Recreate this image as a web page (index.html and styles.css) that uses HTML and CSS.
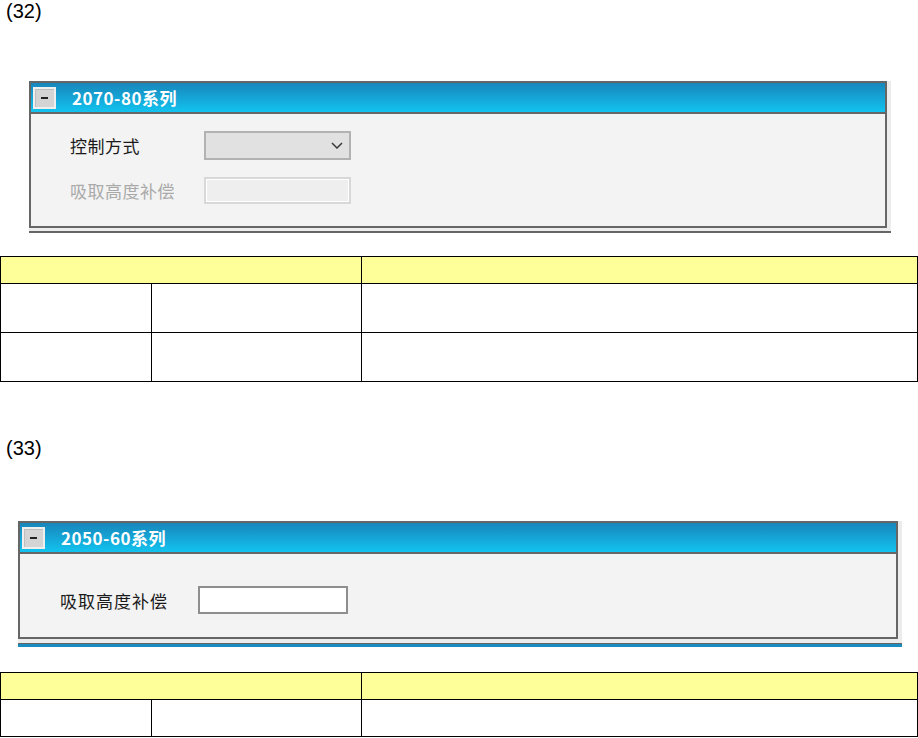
FILE: index.html
```html
<!DOCTYPE html>
<html lang="zh-CN">
<head>
    <meta charset="UTF-8">
    <meta name="viewport" content="width=device-width, initial-scale=1.0">
    <title>系列参数</title>
    <link rel="stylesheet" href="styles.css">
</head>
<body>
    <p class="caption">(32)</p>
    <div class="shot shot-a">
        <div class="panel">
            <div class="panel-head">
                <span class="toggle"></span>
                <span class="panel-title">2070-80系列</span>
            </div>
            <div class="panel-body">
                <div class="field">
                    <span class="field-label">控制方式</span>
                    <div class="select">
                        <svg width="12" height="7" viewBox="0 0 12 7"><path d="M1 1 L6 6 L11 1" fill="none" stroke="#3a3a3a" stroke-width="1.5"/></svg>
                    </div>
                </div>
                <div class="field">
                    <span class="field-label disabled">吸取高度补偿</span>
                    <div class="text-input disabled"></div>
                </div>
            </div>
        </div>
        <div class="next-head"></div>
    </div>

    <table class="spec spec-a">
        <colgroup><col class="c1"><col class="c2"><col class="c3"></colgroup>
        <tr class="head"><td colspan="2"></td><td></td></tr>
        <tr><td></td><td></td><td></td></tr>
        <tr><td></td><td></td><td></td></tr>
    </table>

    <p class="caption caption-b">(33)</p>
    <div class="shot shot-b">
        <div class="panel">
            <div class="panel-head">
                <span class="toggle"></span>
                <span class="panel-title">2050-60系列</span>
            </div>
            <div class="panel-body">
                <div class="field">
                    <span class="field-label">吸取高度补偿</span>
                    <div class="text-input"></div>
                </div>
            </div>
        </div>
        <div class="next-head"></div>
    </div>

    <table class="spec spec-b">
        <colgroup><col class="c1"><col class="c2"><col class="c3"></colgroup>
        <tr class="head"><td colspan="2"></td><td></td></tr>
        <tr class="short"><td></td><td></td><td></td></tr>
    </table>
</body>
</html>
```

FILE: styles.css
```css
body {
    margin: 0;
    font-family: "Liberation Sans", Arial, sans-serif;
    background: #fff;
    color: #000;
}

.caption {
    margin: 0;
    padding-left: 6px;
    font-size: 20px;
    line-height: 23px;
}

.caption-b {
    margin-top: 55px;
}

/* captured window */
.shot {
    background: #ececec;
    overflow: hidden;
}

.shot-a {
    width: 862px;
    margin: 58px 0 0 29px;
}

.shot-b {
    width: 884px;
    margin: 61px 0 0 18px;
}

.panel {
    border: 2px solid #666;
    background: #f3f3f3;
}

.shot-a .panel {
    width: 854px;
}

.shot-b .panel {
    width: 876px;
}

.panel-head {
    height: 29px;
    display: flex;
    align-items: center;
    background: linear-gradient(#1886bb, #12c3ef);
    border-bottom: 2px solid #666;
}

.toggle {
    position: relative;
    width: 19px;
    height: 18px;
    margin-left: 2px;
    background: #d4d4d4;
    border: 2px solid #efefef;
    box-shadow: inset 1px 1px #bdbdbd;
}

.toggle::after {
    content: "";
    position: absolute;
    left: 6px;
    top: 8px;
    width: 7px;
    height: 2px;
    background: #222;
}

.panel-title {
    margin-left: 16px;
    color: #fff;
    font-family: "Noto Sans CJK SC", sans-serif;
    font-weight: 700;
    font-size: 17px;
    letter-spacing: 0.5px;
}

.shot-a .panel-body {
    padding: 17px 0 22px 39px;
}

.shot-b .panel-body {
    padding: 32px 0 23px 40px;
}

.field {
    display: flex;
    align-items: center;
}

.field + .field {
    margin-top: 17px;
}

.field-label {
    font-family: "Noto Sans CJK SC", sans-serif;
    font-size: 17px;
    letter-spacing: 0.5px;
    color: #1a1a1a;
}

.shot-a .field-label {
    width: 134px;
}

.shot-b .field-label {
    margin-right: 30px;
    letter-spacing: 1px;
}

.field-label.disabled {
    color: #a9a9a9;
}

.select {
    box-sizing: border-box;
    width: 147px;
    height: 29px;
    display: flex;
    align-items: center;
    justify-content: flex-end;
    padding-right: 6px;
    background: #e1e1e1;
    border: 2px solid #b2b2b2;
}

.text-input {
    box-sizing: border-box;
    width: 150px;
    height: 28px;
    background: #fff;
    border: 2px solid #8e8e8e;
}

.text-input.disabled {
    width: 147px;
    height: 27px;
    background: #eeeeee;
    border-color: #d8d8d8;
    box-shadow: inset 0 0 0 1px #fff;
}

.next-head {
    margin-top: 3px;
    height: 2px;
    background: #666;
}

.shot-b .next-head {
    margin-top: 4px;
    height: 3px;
    border-top: 1px solid #666;
    background: #1a8cc0;
}

/* spec tables */
.spec {
    border-collapse: collapse;
    table-layout: fixed;
    width: 917px;
}

.spec-a {
    margin-top: 23px;
}

.spec-b {
    margin-top: 25px;
}

.spec .c1 { width: 151px; }
.spec .c2 { width: 210px; }
.spec .c3 { width: 556px; }

.spec td {
    border: 1px solid #000;
    padding: 0;
    height: 48px;
}

.spec .head td {
    height: 26px;
    background: #ffff99;
}

.spec .short td {
    height: 36px;
}
```
